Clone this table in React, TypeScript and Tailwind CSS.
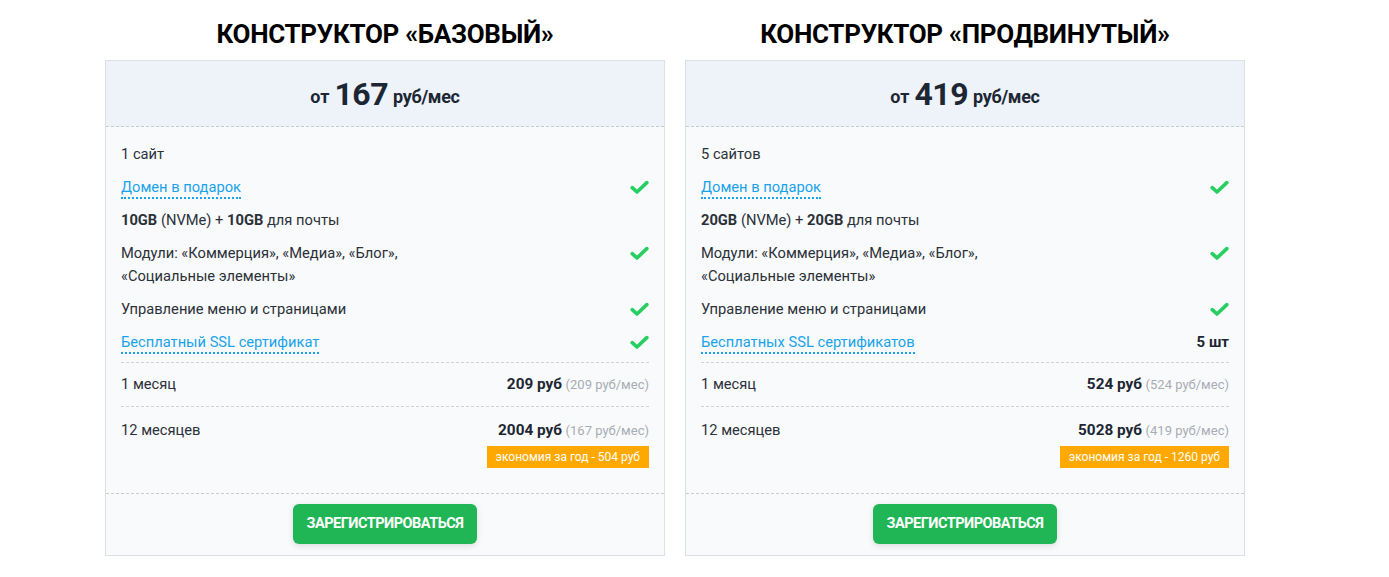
import React from "react";

type Feature = {
  text: React.ReactNode;
  link?: boolean;
  right?: React.ReactNode;
};

type Plan = {
  title: string;
  price: string;
  features: Feature[];
  month: { total: string; per: string };
  year: { total: string; per: string; save: string };
};

const Check = () => (
  <svg width="19" height="15" viewBox="0 0 19 15" className="block">
    <path
      d="M2.2 7.6 L7 12 L16.8 2.6"
      fill="none"
      stroke="#27cf61"
      strokeWidth="3.6"
      strokeLinecap="round"
      strokeLinejoin="round"
    />
  </svg>
);

const plans: Plan[] = [
  {
    title: "КОНСТРУКТОР «БАЗОВЫЙ»",
    price: "167",
    features: [
      { text: "1 сайт" },
      { text: "Домен в подарок", link: true, right: <Check /> },
      {
        text: (
          <>
            <b className="font-bold">10GB</b> (NVMe) + <b className="font-bold">10GB</b> для почты
          </>
        ),
      },
      {
        text: (
          <>
            Модули: «Коммерция», «Медиа», «Блог»,
            <br />
            «Социальные элементы»
          </>
        ),
        right: <Check />,
      },
      { text: "Управление меню и страницами", right: <Check /> },
      { text: "Бесплатный SSL сертификат", link: true, right: <Check /> },
    ],
    month: { total: "209 руб", per: "(209 руб/мес)" },
    year: { total: "2004 руб", per: "(167 руб/мес)", save: "экономия за год - 504 руб" },
  },
  {
    title: "КОНСТРУКТОР «ПРОДВИНУТЫЙ»",
    price: "419",
    features: [
      { text: "5 сайтов" },
      { text: "Домен в подарок", link: true, right: <Check /> },
      {
        text: (
          <>
            <b className="font-bold">20GB</b> (NVMe) + <b className="font-bold">20GB</b> для почты
          </>
        ),
      },
      {
        text: (
          <>
            Модули: «Коммерция», «Медиа», «Блог»,
            <br />
            «Социальные элементы»
          </>
        ),
        right: <Check />,
      },
      { text: "Управление меню и страницами", right: <Check /> },
      {
        text: "Бесплатных SSL сертификатов",
        link: true,
        right: <span className="font-bold text-[15px] text-[#1d2733]">5 шт</span>,
      },
    ],
    month: { total: "524 руб", per: "(524 руб/мес)" },
    year: { total: "5028 руб", per: "(419 руб/мес)", save: "экономия за год - 1260 руб" },
  },
];

function Card({ plan }: { plan: Plan }) {
  return (
    <div className="w-[560px] flex flex-col">
      <h2 className="text-center font-bold text-[26px] leading-[32px] text-black tracking-[-0.3px] pt-[18px] pb-[10px]">
        {plan.title}
      </h2>
      <div className="border border-[#dcdfe3] flex flex-col">
        <div className="bg-[#eef3fa] h-[66px] flex items-center justify-center border-b border-dashed border-[#c8ccd1] text-[#1d2733]">
          <span className="font-bold text-[18px] mt-[6px]">от</span>
          <span className="font-bold text-[32px] mx-[5px] leading-none tracking-[-0.5px]">{plan.price}</span>
          <span className="font-bold text-[18px] mt-[6px] tracking-[-0.3px]">руб/мес</span>
        </div>
        <div className="bg-[#f9fafc] px-[15px] pt-[16px] pb-[25px] border-b border-dashed border-[#c8ccd1]">
          <div className="flex flex-col gap-[10px] pb-[8px] border-b border-dashed border-[#cfd3d8]">
            {plan.features.map((f, i) => (
              <div key={i} className="flex items-start justify-between text-[14.7px] leading-[23px] text-[#2b3138]">
                <div>
                  {f.link ? (
                    <span className="text-[#19a3ea] border-b-2 border-dotted border-[#19a3ea] pb-[1px]">
                      {f.text}
                    </span>
                  ) : (
                    f.text
                  )}
                </div>
                {f.right && <div className="h-[23px] flex items-center">{f.right}</div>}
              </div>
            ))}
          </div>
          <div className="flex items-center justify-between h-[44px] border-b border-dashed border-[#cfd3d8] text-[14.7px] text-[#2b3138]">
            <span>1 месяц</span>
            <span>
              <b className="font-bold text-[15.3px] text-[#1d2733]">{plan.month.total}</b>{" "}
              <span className="text-[#a8adb3] text-[13px]">{plan.month.per}</span>
            </span>
          </div>
          <div className="flex justify-between pt-[12px] text-[14.7px] leading-[22px] text-[#2b3138]">
            <span>12 месяцев</span>
            <div className="flex flex-col items-end gap-[4px]">
              <span>
                <b className="font-bold text-[15.3px] text-[#1d2733]">{plan.year.total}</b>{" "}
                <span className="text-[#a8adb3] text-[13px]">{plan.year.per}</span>
              </span>
              <span className="bg-[#ffa800] text-white text-[12px] leading-[22px] px-[9px]">
                {plan.year.save}
              </span>
            </div>
          </div>
        </div>
        <div className="bg-[#f9fafc] flex justify-center pt-[10px] pb-[11px]">
          <button className="bg-[#21b655] text-white font-bold text-[14.5px] uppercase h-[40px] px-[14px] rounded-[6px] shadow-[0_2px_6px_rgba(0,0,0,0.12)] tracking-[-0.5px]">
            Зарегистрироваться
          </button>
        </div>
      </div>
    </div>
  );
}

export default function App() {
  return (
    <div className="bg-white min-h-[577px] font-['Roboto','Liberation_Sans',sans-serif]">
      <div className="flex gap-[20px] pl-[105px]">
        {plans.map((p, i) => (
          <Card key={i} plan={p} />
        ))}
      </div>
    </div>
  );
}
